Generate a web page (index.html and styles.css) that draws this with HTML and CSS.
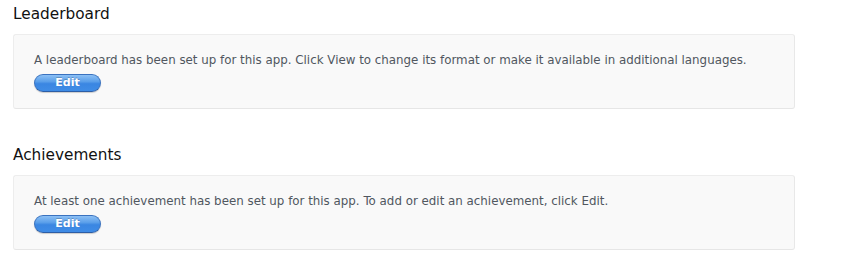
FILE: index.html
```html
<!DOCTYPE html>
<html>
<head>
<meta charset="utf-8">
<link rel="stylesheet" href="styles.css">
</head>
<body>
<section class="section">
  <h2 class="title">Leaderboard</h2>
  <div class="panel">
    <p class="desc">A leaderboard has been set up for this app. Click View to change its format or make it available in additional languages.</p>
    <button class="btn">Edit</button>
  </div>
</section>
<section class="section">
  <h2 class="title">Achievements</h2>
  <div class="panel">
    <p class="desc">At least one achievement has been set up for this app. To add or edit an achievement, click Edit.</p>
    <button class="btn">Edit</button>
  </div>
</section>
</body>
</html>
```
FILE: styles.css
```css
html, body {
  margin: 0;
  padding: 0;
  background: #fff;
}
body {
  font-family: "DejaVu Sans", "Liberation Sans", sans-serif;
  padding: 4px 60px 0 13px;
}
.section {
  display: flex;
  flex-direction: column;
  margin-bottom: 36px;
}
.title {
  margin: 0 0 10px 0;
  font-size: 15.3px;
  font-weight: normal;
  color: #111;
  line-height: 20px;
}
.panel {
  width: 782px;
  height: 75px;
  box-sizing: border-box;
  background: #f9f9f9;
  border: 1px solid #ededed;
  border-bottom-color: #e6e6e6;
  border-right-color: #e8e8e8;
  border-radius: 3px;
  padding: 18px 20px 0 20px;
  display: flex;
  flex-direction: column;
  align-items: flex-start;
  gap: 7px;
}
.desc {
  margin: 0;
  font-size: 11.85px;
  line-height: 14px;
  color: #50575f;
}
.btn {
  width: 67px;
  height: 18px;
  border-radius: 9px;
  border: 1px solid #3a72bf;
  border-bottom-color: #2d5ea6;
  background: linear-gradient(#8cc0f5 0%, #5ca0ea 40%, #3a86e2 55%, #3f8ce6 100%);
  color: #fff;
  font-family: "DejaVu Sans", sans-serif;
  font-weight: bold;
  font-size: 11px;
  line-height: 16px;
  padding: 0;
  text-shadow: 0 -1px 0 rgba(0,0,0,0.2);
  box-shadow: 0 1px 1px rgba(0,0,0,0.18);
}
```
